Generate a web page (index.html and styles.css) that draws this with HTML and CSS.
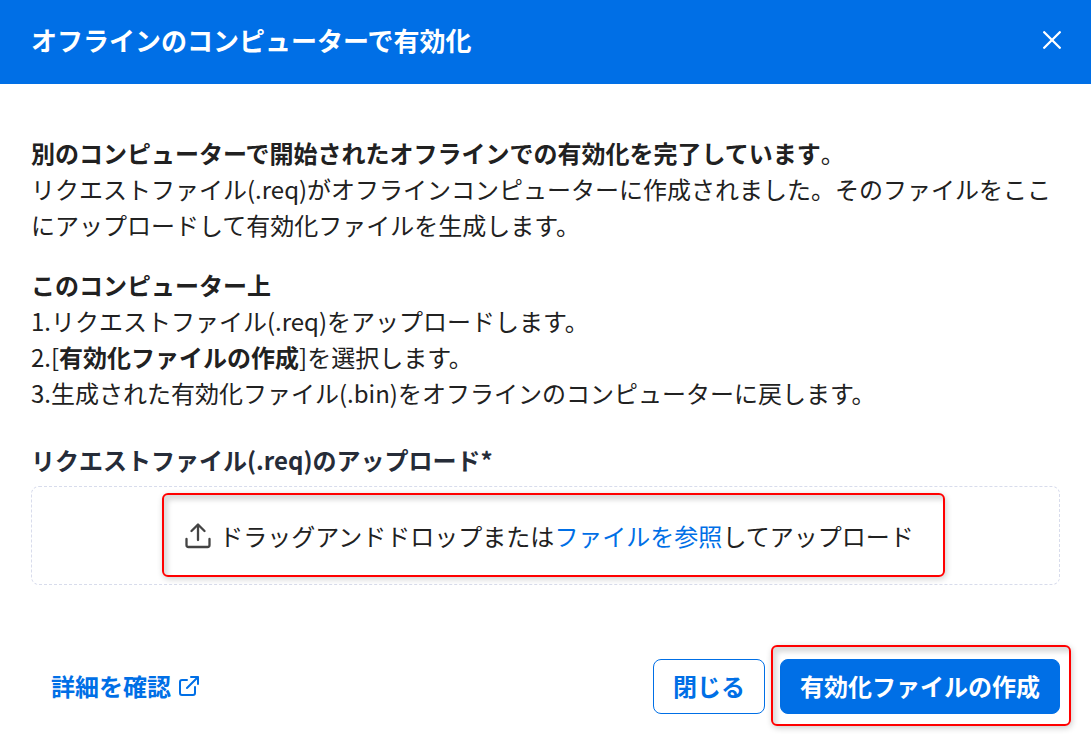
FILE: index.html
```html
<!DOCTYPE html>
<html lang="ja">
<head>
<meta charset="UTF-8" />
<meta name="viewport" content="width=device-width, initial-scale=1" />
<title>オフラインのコンピューターで有効化</title>
<link rel="stylesheet" href="styles.css">
</head>
<body>
<header class="dialog-header">
  <h1>オフラインのコンピューターで有効化</h1>
  <button type="button" class="close-icon" aria-label="閉じる">
    <svg width="18" height="18" viewBox="0 0 18 18" fill="none" stroke="currentColor" stroke-width="2.3" stroke-linecap="round">
      <path d="M1.2 1.2l15.6 15.6M16.8 1.2L1.2 16.8" />
    </svg>
  </button>
</header>

<main class="dialog-body">
  <p><strong>別のコンピューターで開始されたオフラインでの有効化を完了しています</strong>。<br>リクエストファイル(.req)がオフラインコンピューターに作成されました。そのファイルをここにアップロードして有効化ファイルを生成します。</p>

  <p><strong>このコンピューター上</strong><br>
  1.リクエストファイル(.req)をアップロードします。<br>
  2.[<strong>有効化ファイルの作成</strong>]を選択します。<br>
  3.生成された有効化ファイル(.bin)をオフラインのコンピューターに戻します。</p>

  <label class="field-label" for="reqFile">リクエストファイル(.req)のアップロード*</label>
  <div class="dropzone">
    <input type="file" id="reqFile" class="file-input" accept=".req" />
    <div class="drop-text">
      <svg class="upload-icon" width="26" height="26" viewBox="0 0 26 26" fill="none" stroke="currentColor" stroke-width="2.3" stroke-linecap="round" stroke-linejoin="round">
        <path d="M13 17V2M6.5 8L13 1.5 19.5 8" />
        <path d="M1.5 16v6a2 2 0 0 0 2 2h19a2 2 0 0 0 2-2v-6" />
      </svg>
      <span>ドラッグアンドドロップまたは<a href="#reqFile">ファイルを参照</a>してアップロード</span>
      <div class="highlight highlight-drop"></div>
    </div>
  </div>
</main>

<footer class="dialog-footer">
  <a class="details" href="#">詳細を確認
    <svg width="20" height="20" viewBox="0 0 20 20" fill="none" stroke="currentColor" stroke-width="2" stroke-linecap="round" stroke-linejoin="round">
      <path d="M8 4H3a2 2 0 0 0-2 2v11a2 2 0 0 0 2 2h11a2 2 0 0 0 2-2v-6" />
      <path d="M8 12L19 1M12 1h7v7" />
    </svg>
  </a>
  <button type="button" class="btn">閉じる</button>
  <div class="create">
    <button type="button" class="btn btn-primary">有効化ファイルの作成</button>
    <div class="highlight highlight-create"></div>
  </div>
</footer>
</body>
</html>
```

FILE: styles.css
```css
* {
  box-sizing: border-box;
}

body {
  margin: 0;
  background: #fff;
  color: #212121;
  font-family: "Noto Sans CJK JP", sans-serif;
  font-size: 24px;
  line-height: 36px;
}

a {
  color: #006fe6;
  text-decoration: none;
}

.dialog-header {
  display: flex;
  align-items: center;
  justify-content: space-between;
  padding: 20px 30px 24px 31px;
  background: #006fe6;
  color: #fff;
}

.dialog-header h1 {
  margin: 0;
  font-size: 26px;
  line-height: 40px;
}

.close-icon {
  display: flex;
  padding: 0;
  border: none;
  background: none;
  color: inherit;
  cursor: pointer;
}

.dialog-body {
  padding: 51px 31px 0;
}

p {
  margin: 0 0 24px;
}

.field-label {
  display: block;
  margin: 31px 0 8px;
  color: #262c38;
  font-weight: bold;
}

.dropzone {
  display: flex;
  align-items: center;
  justify-content: center;
  padding: 31px 0 30px;
  border: 1px dashed #d8dcec;
  border-radius: 8px;
}

.file-input {
  position: absolute;
  width: 1px;
  height: 1px;
  opacity: 0;
}

.drop-text {
  position: relative;
  display: flex;
  align-items: center;
  gap: 8px;
  padding-left: 8px;
}

.upload-icon {
  color: #444;
}

/* red callout frames drawn over the dialog */
.highlight {
  position: absolute;
  border: 2px solid #f00;
  border-radius: 6px;
  box-shadow: 1px 2px 6px rgba(0, 0, 0, 0.2), inset 4px 5px 5px rgba(0, 0, 0, 0.14);
  pointer-events: none;
}

.highlight-drop {
  inset: -25px -31px -23px -15px;
}

.highlight-create {
  inset: -14px -11px -12px -9px;
}

.dialog-footer {
  display: flex;
  align-items: center;
  padding: 74px 31px 30px 51px;
}

.details {
  display: flex;
  align-items: center;
  gap: 8px;
  margin-right: auto;
  padding-bottom: 2px;
  font-weight: bold;
}

.btn {
  display: block;
  padding: 8px 19px 9px;
  border: 1px solid #006fe6;
  border-radius: 8px;
  background: #fff;
  color: #006fe6;
  font: inherit;
  font-weight: bold;
  cursor: pointer;
}

.btn-primary {
  background: #006fe6;
  color: #fff;
}

.create {
  position: relative;
  margin-left: 15px;
}
```
